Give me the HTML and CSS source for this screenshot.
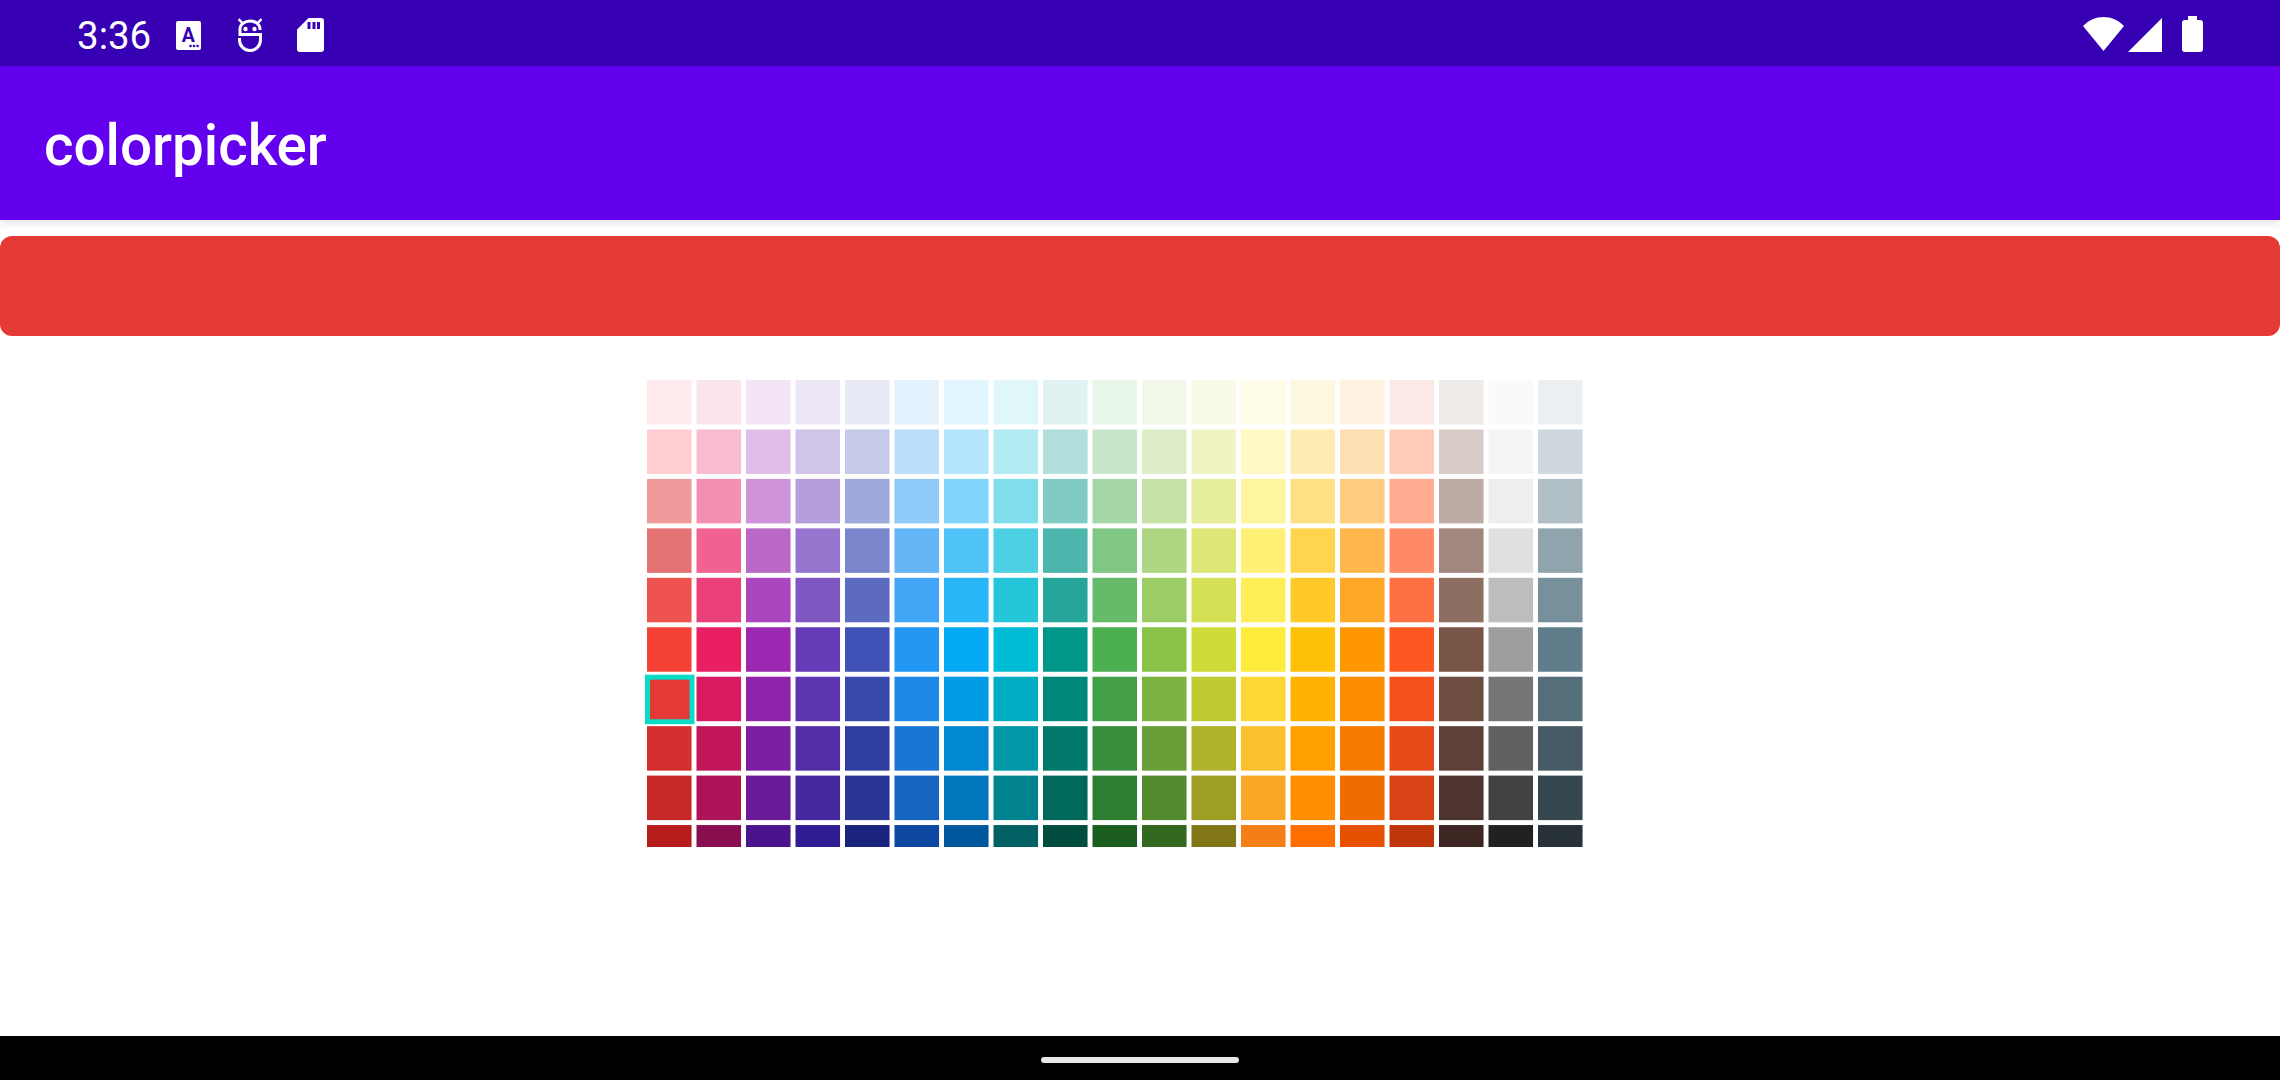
FILE: index.html
```html
<!DOCTYPE html>
<html lang="en">
<head>
<meta charset="utf-8">
<title>colorpicker</title>
<link rel="stylesheet" href="styles.css">
</head>
<body>
<div class="screen">
  <header class="status-bar">
    <div class="status-left">
      <span class="clock">3:36</span>
      <svg class="ic ic-a" viewBox="0 0 25 29"><path class="w" d="M2 0H23a2 2 0 0 1 2 2V27a2 2 0 0 1-2 2H2a2 2 0 0 1-2-2V2a2 2 0 0 1 2-2Z"/><text class="ic-letter" x="12.300" y="20.700">A</text><circle class="d" cx="14.500" cy="25" r="1.300"/><circle class="d" cx="18" cy="25" r="1.300"/><circle class="d" cx="21.500" cy="25" r="1.300"/></svg>
      <svg class="ic ic-droid" viewBox="0 0 24 34"><path class="st" d="M22 12V11A10 8 0 0 0 2 11V16.500H22.500V22A10.500 10.500 0 0 1 1.500 22V20"/><path class="st thin" d="M0.500 1L4 4.700M23.500 1L20 4.700"/><circle class="w" cx="7.500" cy="11" r="2.200"/><circle class="w" cx="16.500" cy="11" r="2.200"/></svg>
      <svg class="ic ic-sd" viewBox="0 0 27 34"><path class="w" d="M11.500 0H24a3 3 0 0 1 3 3V31a3 3 0 0 1-3 3H3a3 3 0 0 1-3-3V11.500Z"/><path class="d" d="M10.500 4h3v7h-3zM15.500 4h3v7h-3zM20 4h3v7h-3z"/></svg>
    </div>
    <div class="status-right">
      <svg class="ic ic-wifi" viewBox="0 0 41 34"><path class="w" d="M0 9C11.500-3 29.500-3 41 9L20.500 34Z"/></svg>
      <svg class="ic ic-signal" viewBox="0 0 34 34"><path class="w" d="M34 0V34H0Z"/></svg>
      <svg class="ic ic-batt" viewBox="0 0 21 36"><path class="w" d="M6 0H15V4H18a3 3 0 0 1 3 3V33a3 3 0 0 1-3 3H3a3 3 0 0 1-3-3V7a3 3 0 0 1 3-3H6Z"/></svg>
    </div>
  </header>
  <div class="app-bar"><h1 class="app-title">colorpicker</h1></div>
  <main class="content">
    <div class="preview"></div>
    <div class="palette">
      <div class="swatch red50"></div><div class="swatch pink50"></div><div class="swatch purple50"></div><div class="swatch deep50"></div><div class="swatch indigo50"></div><div class="swatch blue50"></div><div class="swatch lblue50"></div><div class="swatch cyan50"></div><div class="swatch teal50"></div><div class="swatch green50"></div><div class="swatch lgreen50"></div><div class="swatch lime50"></div><div class="swatch yellow50"></div><div class="swatch amber50"></div><div class="swatch orange50"></div><div class="swatch dorange50"></div><div class="swatch brown50"></div><div class="swatch grey50"></div><div class="swatch bgrey50"></div>
      <div class="swatch red100"></div><div class="swatch pink100"></div><div class="swatch purple100"></div><div class="swatch deep100"></div><div class="swatch indigo100"></div><div class="swatch blue100"></div><div class="swatch lblue100"></div><div class="swatch cyan100"></div><div class="swatch teal100"></div><div class="swatch green100"></div><div class="swatch lgreen100"></div><div class="swatch lime100"></div><div class="swatch yellow100"></div><div class="swatch amber100"></div><div class="swatch orange100"></div><div class="swatch dorange100"></div><div class="swatch brown100"></div><div class="swatch grey100"></div><div class="swatch bgrey100"></div>
      <div class="swatch red200"></div><div class="swatch pink200"></div><div class="swatch purple200"></div><div class="swatch deep200"></div><div class="swatch indigo200"></div><div class="swatch blue200"></div><div class="swatch lblue200"></div><div class="swatch cyan200"></div><div class="swatch teal200"></div><div class="swatch green200"></div><div class="swatch lgreen200"></div><div class="swatch lime200"></div><div class="swatch yellow200"></div><div class="swatch amber200"></div><div class="swatch orange200"></div><div class="swatch dorange200"></div><div class="swatch brown200"></div><div class="swatch grey200"></div><div class="swatch bgrey200"></div>
      <div class="swatch red300"></div><div class="swatch pink300"></div><div class="swatch purple300"></div><div class="swatch deep300"></div><div class="swatch indigo300"></div><div class="swatch blue300"></div><div class="swatch lblue300"></div><div class="swatch cyan300"></div><div class="swatch teal300"></div><div class="swatch green300"></div><div class="swatch lgreen300"></div><div class="swatch lime300"></div><div class="swatch yellow300"></div><div class="swatch amber300"></div><div class="swatch orange300"></div><div class="swatch dorange300"></div><div class="swatch brown300"></div><div class="swatch grey300"></div><div class="swatch bgrey300"></div>
      <div class="swatch red400"></div><div class="swatch pink400"></div><div class="swatch purple400"></div><div class="swatch deep400"></div><div class="swatch indigo400"></div><div class="swatch blue400"></div><div class="swatch lblue400"></div><div class="swatch cyan400"></div><div class="swatch teal400"></div><div class="swatch green400"></div><div class="swatch lgreen400"></div><div class="swatch lime400"></div><div class="swatch yellow400"></div><div class="swatch amber400"></div><div class="swatch orange400"></div><div class="swatch dorange400"></div><div class="swatch brown400"></div><div class="swatch grey400"></div><div class="swatch bgrey400"></div>
      <div class="swatch red500"></div><div class="swatch pink500"></div><div class="swatch purple500"></div><div class="swatch deep500"></div><div class="swatch indigo500"></div><div class="swatch blue500"></div><div class="swatch lblue500"></div><div class="swatch cyan500"></div><div class="swatch teal500"></div><div class="swatch green500"></div><div class="swatch lgreen500"></div><div class="swatch lime500"></div><div class="swatch yellow500"></div><div class="swatch amber500"></div><div class="swatch orange500"></div><div class="swatch dorange500"></div><div class="swatch brown500"></div><div class="swatch grey500"></div><div class="swatch bgrey500"></div>
      <div class="swatch red600 selected"></div><div class="swatch pink600"></div><div class="swatch purple600"></div><div class="swatch deep600"></div><div class="swatch indigo600"></div><div class="swatch blue600"></div><div class="swatch lblue600"></div><div class="swatch cyan600"></div><div class="swatch teal600"></div><div class="swatch green600"></div><div class="swatch lgreen600"></div><div class="swatch lime600"></div><div class="swatch yellow600"></div><div class="swatch amber600"></div><div class="swatch orange600"></div><div class="swatch dorange600"></div><div class="swatch brown600"></div><div class="swatch grey600"></div><div class="swatch bgrey600"></div>
      <div class="swatch red700"></div><div class="swatch pink700"></div><div class="swatch purple700"></div><div class="swatch deep700"></div><div class="swatch indigo700"></div><div class="swatch blue700"></div><div class="swatch lblue700"></div><div class="swatch cyan700"></div><div class="swatch teal700"></div><div class="swatch green700"></div><div class="swatch lgreen700"></div><div class="swatch lime700"></div><div class="swatch yellow700"></div><div class="swatch amber700"></div><div class="swatch orange700"></div><div class="swatch dorange700"></div><div class="swatch brown700"></div><div class="swatch grey700"></div><div class="swatch bgrey700"></div>
      <div class="swatch red800"></div><div class="swatch pink800"></div><div class="swatch purple800"></div><div class="swatch deep800"></div><div class="swatch indigo800"></div><div class="swatch blue800"></div><div class="swatch lblue800"></div><div class="swatch cyan800"></div><div class="swatch teal800"></div><div class="swatch green800"></div><div class="swatch lgreen800"></div><div class="swatch lime800"></div><div class="swatch yellow800"></div><div class="swatch amber800"></div><div class="swatch orange800"></div><div class="swatch dorange800"></div><div class="swatch brown800"></div><div class="swatch grey800"></div><div class="swatch bgrey800"></div>
      <div class="swatch red900"></div><div class="swatch pink900"></div><div class="swatch purple900"></div><div class="swatch deep900"></div><div class="swatch indigo900"></div><div class="swatch blue900"></div><div class="swatch lblue900"></div><div class="swatch cyan900"></div><div class="swatch teal900"></div><div class="swatch green900"></div><div class="swatch lgreen900"></div><div class="swatch lime900"></div><div class="swatch yellow900"></div><div class="swatch amber900"></div><div class="swatch orange900"></div><div class="swatch dorange900"></div><div class="swatch brown900"></div><div class="swatch grey900"></div><div class="swatch bgrey900"></div>
    </div>
  </main>
  <footer class="nav-bar"><div class="home-handle"></div></footer>
</div>
</body>
</html>
```
FILE: styles.css
```css
* { box-sizing: border-box; }
html, body { margin: 0; padding: 0; }
body { background: #fff; font-family: Roboto, "Liberation Sans", sans-serif; }
.screen { width: 2280px; height: 1080px; display: flex; flex-direction: column; overflow: hidden; }

.status-bar { height: 66px; flex: none; background: #3700b3; display: flex; justify-content: space-between; align-items: center; padding: 4px 77px 0 77px; }
.status-left, .status-right { display: flex; align-items: center; }
.clock { color: #fff; font-size: 38.5px; line-height: 62px; width: 99px; padding-top: 1px; }
.ic { display: block; flex: none; }
.w { fill: #fff; }
.d { fill: #3700b3; }
.st { fill: none; stroke: #fff; stroke-width: 3; }
.st.thin { stroke-width: 2.5; }
.ic-letter { font: 700 19.5px Roboto, sans-serif; fill: #3700b3; text-anchor: middle; }
.ic-a { width: 25px; height: 29px; margin-right: 37px; }
.ic-droid { width: 24px; height: 34px; margin-right: 35px; }
.ic-sd { width: 27px; height: 34px; }
.ic-wifi { width: 41px; height: 34px; margin: 0 4px 2px 0; }
.ic-signal { width: 34px; height: 34px; margin-right: 20px; }
.ic-batt { width: 21px; height: 36px; margin-bottom: 2px; }

.app-bar { height: 154px; flex: none; background: #6200ee; display: flex; align-items: center; padding: 6px 0 0 44px; box-shadow: 0 3px 8px rgba(0,0,0,.12); position: relative; }
.app-title { margin: 0; color: #fff; font-size: 56.5px; font-weight: 500; line-height: 1; }

.content { flex: 1; min-height: 0; padding-top: 16px; }
.preview { height: 100px; background: #e53935; border-radius: 12px; }
.palette { margin: 44px 0 0 647.4px; width: 945px; height: 472.2px; display: grid; grid-template-columns: repeat(19, 45px); grid-auto-rows: 45px; gap: 5px; transform: scale(.99, .989); transform-origin: 0 0; clip-path: inset(-5px -5px 0 -5px); }
.selected { position: relative; }
.selected::after { content: ""; position: absolute; inset: -2.5px; border: 5px solid #08dcc6; }

.nav-bar { height: 44px; flex: none; background: #000; display: flex; justify-content: center; align-items: center; padding-top: 4px; }
.home-handle { width: 198px; height: 6px; border-radius: 3px; background: #e8e8e8; }

.red50{background:#ffebee}.red100{background:#ffcdd2}.red200{background:#ef9a9a}.red300{background:#e57373}.red400{background:#ef5350}.red500{background:#f44336}.red600{background:#e53935}.red700{background:#d32f2f}.red800{background:#c62828}.red900{background:#b71c1c}
.pink50{background:#fce4ec}.pink100{background:#f8bbd0}.pink200{background:#f48fb1}.pink300{background:#f06292}.pink400{background:#ec407a}.pink500{background:#e91e63}.pink600{background:#d81b60}.pink700{background:#c2185b}.pink800{background:#ad1457}.pink900{background:#880e4f}
.purple50{background:#f3e5f5}.purple100{background:#e1bee7}.purple200{background:#ce93d8}.purple300{background:#ba68c8}.purple400{background:#ab47bc}.purple500{background:#9c27b0}.purple600{background:#8e24aa}.purple700{background:#7b1fa2}.purple800{background:#6a1b9a}.purple900{background:#4a148c}
.deep50{background:#ede7f6}.deep100{background:#d1c4e9}.deep200{background:#b39ddb}.deep300{background:#9575cd}.deep400{background:#7e57c2}.deep500{background:#673ab7}.deep600{background:#5e35b1}.deep700{background:#512da8}.deep800{background:#4527a0}.deep900{background:#311b92}
.indigo50{background:#e8eaf6}.indigo100{background:#c5cae9}.indigo200{background:#9fa8da}.indigo300{background:#7986cb}.indigo400{background:#5c6bc0}.indigo500{background:#3f51b5}.indigo600{background:#3949ab}.indigo700{background:#303f9f}.indigo800{background:#283593}.indigo900{background:#1a237e}
.blue50{background:#e3f2fd}.blue100{background:#bbdefb}.blue200{background:#90caf9}.blue300{background:#64b5f6}.blue400{background:#42a5f5}.blue500{background:#2196f3}.blue600{background:#1e88e5}.blue700{background:#1976d2}.blue800{background:#1565c0}.blue900{background:#0d47a1}
.lblue50{background:#e1f5fe}.lblue100{background:#b3e5fc}.lblue200{background:#81d4fa}.lblue300{background:#4fc3f7}.lblue400{background:#29b6f6}.lblue500{background:#03a9f4}.lblue600{background:#039be5}.lblue700{background:#0288d1}.lblue800{background:#0277bd}.lblue900{background:#01579b}
.cyan50{background:#e0f7fa}.cyan100{background:#b2ebf2}.cyan200{background:#80deea}.cyan300{background:#4dd0e1}.cyan400{background:#26c6da}.cyan500{background:#00bcd4}.cyan600{background:#00acc1}.cyan700{background:#0097a7}.cyan800{background:#00838f}.cyan900{background:#006064}
.teal50{background:#e0f2f1}.teal100{background:#b2dfdb}.teal200{background:#80cbc4}.teal300{background:#4db6ac}.teal400{background:#26a69a}.teal500{background:#009688}.teal600{background:#00897b}.teal700{background:#00796b}.teal800{background:#00695c}.teal900{background:#004d40}
.green50{background:#e8f5e9}.green100{background:#c8e6c9}.green200{background:#a5d6a7}.green300{background:#81c784}.green400{background:#66bb6a}.green500{background:#4caf50}.green600{background:#43a047}.green700{background:#388e3c}.green800{background:#2e7d32}.green900{background:#1b5e20}
.lgreen50{background:#f1f8e9}.lgreen100{background:#dcedc8}.lgreen200{background:#c5e1a5}.lgreen300{background:#aed581}.lgreen400{background:#9ccc65}.lgreen500{background:#8bc34a}.lgreen600{background:#7cb342}.lgreen700{background:#689f38}.lgreen800{background:#558b2f}.lgreen900{background:#33691e}
.lime50{background:#f9fbe7}.lime100{background:#f0f4c3}.lime200{background:#e6ee9c}.lime300{background:#dce775}.lime400{background:#d4e157}.lime500{background:#cddc39}.lime600{background:#c0ca33}.lime700{background:#afb42b}.lime800{background:#9e9d24}.lime900{background:#827717}
.yellow50{background:#fffde7}.yellow100{background:#fff9c4}.yellow200{background:#fff59d}.yellow300{background:#fff176}.yellow400{background:#ffee58}.yellow500{background:#ffeb3b}.yellow600{background:#fdd835}.yellow700{background:#fbc02d}.yellow800{background:#f9a825}.yellow900{background:#f57f17}
.amber50{background:#fff8e1}.amber100{background:#ffecb3}.amber200{background:#ffe082}.amber300{background:#ffd54f}.amber400{background:#ffca28}.amber500{background:#ffc107}.amber600{background:#ffb300}.amber700{background:#ffa000}.amber800{background:#ff8f00}.amber900{background:#ff6f00}
.orange50{background:#fff3e0}.orange100{background:#ffe0b2}.orange200{background:#ffcc80}.orange300{background:#ffb74d}.orange400{background:#ffa726}.orange500{background:#ff9800}.orange600{background:#fb8c00}.orange700{background:#f57c00}.orange800{background:#ef6c00}.orange900{background:#e65100}
.dorange50{background:#fbe9e7}.dorange100{background:#ffccbc}.dorange200{background:#ffab91}.dorange300{background:#ff8a65}.dorange400{background:#ff7043}.dorange500{background:#ff5722}.dorange600{background:#f4511e}.dorange700{background:#e64a19}.dorange800{background:#d84315}.dorange900{background:#bf360c}
.brown50{background:#efebe9}.brown100{background:#d7ccc8}.brown200{background:#bcaaa4}.brown300{background:#a1887f}.brown400{background:#8d6e63}.brown500{background:#795548}.brown600{background:#6d4c41}.brown700{background:#5d4037}.brown800{background:#4e342e}.brown900{background:#3e2723}
.grey50{background:#fafafa}.grey100{background:#f5f5f5}.grey200{background:#eeeeee}.grey300{background:#e0e0e0}.grey400{background:#bdbdbd}.grey500{background:#9e9e9e}.grey600{background:#757575}.grey700{background:#616161}.grey800{background:#424242}.grey900{background:#212121}
.bgrey50{background:#eceff1}.bgrey100{background:#cfd8dc}.bgrey200{background:#b0bec5}.bgrey300{background:#90a4ae}.bgrey400{background:#78909c}.bgrey500{background:#607d8b}.bgrey600{background:#546e7a}.bgrey700{background:#455a64}.bgrey800{background:#37474f}.bgrey900{background:#263238}
```
